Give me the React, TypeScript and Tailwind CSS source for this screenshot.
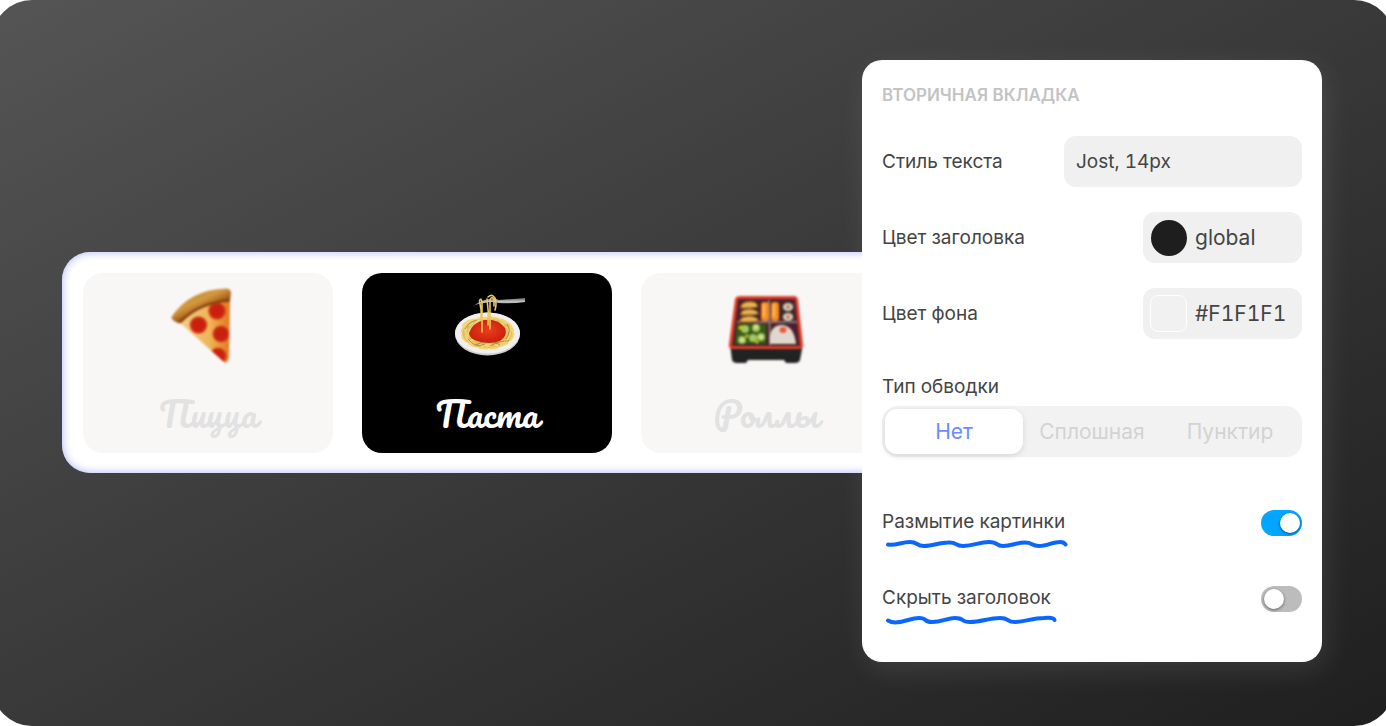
import { useState } from "react";

const BORDER_TYPES = ["Нет", "Сплошная", "Пунктир"];

function PizzaIcon() {
  return (
    <svg viewBox="3 0 90 90" className="h-[90px] w-[90px] blur-[1px]" aria-hidden="true">
      <defs>
        <linearGradient id="cheese" x1="0" y1="0" x2="1" y2="0">
          <stop offset="0" stopColor="#f0cf8c" />
          <stop offset="0.6" stopColor="#efb558" />
          <stop offset="1" stopColor="#e2781c" />
        </linearGradient>
        <linearGradient id="crust" gradientUnits="userSpaceOnUse" x1="33" y1="14" x2="41" y2="31">
          <stop offset="0" stopColor="#c98a2e" />
          <stop offset="0.45" stopColor="#d39a3f" />
          <stop offset="0.8" stopColor="#b87428" />
          <stop offset="1" stopColor="#9a5316" />
        </linearGradient>
        <radialGradient id="pepperoni">
          <stop offset="0" stopColor="#cc1d10" />
          <stop offset="0.7" stopColor="#c8220f" />
          <stop offset="1" stopColor="#dc4a1c" />
        </radialGradient>
        <clipPath id="slice">
          <path d="M19 42 Q40 20 70 19 L69 77 Q68 83 64 82 Z" />
        </clipPath>
      </defs>
      <path d="M19 42 Q40 20 70 19 L69 77 Q68 84 64 82 Z" fill="url(#cheese)" />
      <g clipPath="url(#slice)">
        <circle cx="38.500" cy="45" r="8.800" fill="url(#pepperoni)" />
        <circle cx="57" cy="31" r="8.800" fill="url(#pepperoni)" />
        <circle cx="61" cy="54" r="8.500" fill="url(#pepperoni)" />
        <circle cx="58" cy="76" r="8.500" fill="url(#pepperoni)" />
      </g>
      <path
        d="M11.500 37 Q29 10 66 8.500 Q71 8.500 71 13 L70 21 Q41 22 21 43 Q19 44 16 42 Q11 39.500 11.500 37 Z"
        fill="url(#crust)"
      />
      <path d="M20 42 Q40 22 70 20.500" fill="none" stroke="#8a4310" strokeWidth="2.500" />
    </svg>
  );
}

function PastaIcon() {
  return (
    <svg viewBox="-3 2 80 75" className="h-[75px] w-20 blur-[0.3px]" aria-hidden="true">
      <defs>
        <radialGradient id="sauce" cx="0.5" cy="0.45">
          <stop offset="0" stopColor="#ee3d1c" />
          <stop offset="1" stopColor="#cb230e" />
        </radialGradient>
        <linearGradient id="fork" x1="0" y1="0" x2="0" y2="1">
          <stop offset="0" stopColor="#666" />
          <stop offset="0.5" stopColor="#ccc" />
          <stop offset="1" stopColor="#444" />
        </linearGradient>
      </defs>
      <ellipse cx="37.500" cy="48" rx="32.500" ry="21.500" fill="#cfcfcf" />
      <ellipse cx="37.500" cy="47" rx="32.500" ry="20.500" fill="#f1efee" />
      <ellipse cx="37.500" cy="47" rx="25.500" ry="15.500" fill="#dfbd60" />
      <g fill="none" stroke="#f3d475" strokeWidth="1.800">
        <ellipse cx="37.500" cy="47" rx="26" ry="15.500" strokeDasharray="9 2" />
        <ellipse cx="37" cy="47" rx="22" ry="13" strokeDasharray="5 3" />
        <path d="M12 40 Q20 31 29 35 Q18 42 17 53 M17 36 Q12 49 23 60 M20 55 Q34 48 42 61 M31 62 Q42 53 58 55 M46 60 Q63 55 60 40 M51 33 Q66 39 62 52 M33 33 Q45 28 57 38" />
      </g>
      <g fill="none" stroke="#9b7930" strokeWidth="0.700">
        <path d="M15 43 Q20 35 27 34 M18 53 Q26 63 35 58 M40 60 Q51 54 59 55 M57 38 Q62 45 56 53 M26 59 Q39 51 50 59" />
      </g>
      <path d="M19 47 Q22 37 34 34 Q48 32 55 42 Q58 50 50 55 Q40 59 27 55 Q19 52 19 47Z" fill="url(#sauce)" />
      <path d="M23 20 Q33 13 44 12 L49 14 Q62 13 75 12 L75 16 Q62 18 49 17 Q40 15 35 17 Q30 17 23 20Z" fill="url(#fork)" />
      <g fill="none" stroke="#e8c85e" strokeWidth="1.600" strokeLinecap="round">
        <path d="M32 46 V16 Q31 11 29.500 15 Q32 24 31 33 M38 39 Q39 26 37 13 M40 43 V14 Q42 9 44 14 V20 M45 12 Q47 18 45 24" />
        <path d="M38 11 Q43 7 45 13" />
      </g>
    </svg>
  );
}

function BentoIcon() {
  return (
    <svg viewBox="1 -3 90 85" className="h-[85px] w-[90px] blur-[0.8px]" aria-hidden="true">
      <path d="M10 58 L12 74 Q13 77 17 77 L26 77 L28 74 L64 74 L66 77 L75 77 Q79 77 80 74 L83 58Z" fill="#202321" />
      <path d="M15 13 Q16 10 20 10 L74 10 Q77 10 78 13 L83 58 Q84 63 79 63 L13 63 Q8 63 9 58Z" fill="#df3f2a" />
      <path d="M18 13 L75 13 L80 60 L12 60Z" fill="#4c2028" />
      <path d="M49 14 L50 59 M17 36 L77 36" stroke="#8c737b" strokeWidth="2" />
      <g fill="#d69c3c" stroke="#7b431d" strokeWidth="1">
        <path d="M20 22 Q21 15 31 15 Q38 16 38 21 Q30 24 20 22Z" />
        <path d="M20 29 Q21 22 31 23 Q38 24 39 28 Q30 31 20 29Z" />
        <path d="M19 36 Q20 29 31 30 Q38 31 39 35 Q30 38 19 36Z" />
      </g>
      <path d="M23 20 Q30 17 36 20 M23 27 Q30 24 36 27 M23 34 Q30 31 36 34" stroke="#f2d276" strokeWidth="1.500" fill="none" />
      <g fill="#f58c23">
        <rect x="41" y="16" width="8" height="19" rx="3" />
        <rect x="51" y="16" width="8" height="19" rx="3" />
      </g>
      <path d="M44 18 V31 M54 18 V31" stroke="#ffc064" strokeWidth="2" />
      {[21, 31].map((y) => (
        <g key={y}>
          <ellipse cx="68" cy={y} rx="6" ry="5" fill="#334039" />
          <ellipse cx="68" cy={y} rx="5" ry="4" fill="#d8d4c6" />
          <circle cx="68" cy={y} r="2" fill="#dc714e" />
        </g>
      ))}
      <path d="M17 38 L46 38 L46 58 L15 58Z" fill="#325c17" />
      <g fill="#a4c75f">
        <circle cx="25" cy="43" r="4" />
        <circle cx="36" cy="42" r="4" />
        <circle cx="22" cy="54" r="4" />
        <circle cx="33" cy="52" r="4" />
        <circle cx="41" cy="51" r="4" />
      </g>
      <g fill="#e8e09b">
        <circle cx="36" cy="41" r="2" />
        <circle cx="22" cy="54" r="2" />
        <circle cx="41" cy="51" r="2" />
      </g>
      <path d="M19 43 L22 40 M26 49 L28 51 M36 55 L38 57" stroke="#dfc21b" strokeWidth="3" />
      <path d="M50 58 Q48 40 61 39 Q74 39 76 58Z" fill="#dfd8cf" />
      <ellipse cx="63" cy="44" rx="3.500" ry="3" fill="#ee5737" />
    </svg>
  );
}

const TABS = [
  { label: "Пицца", icon: <PizzaIcon />, active: false },
  { label: "Паста", icon: <PastaIcon />, active: true },
  { label: "Роллы", icon: <BentoIcon />, active: false },
];

function Toggle({ id, defaultChecked }: { id: string; defaultChecked?: boolean }) {
  return (
    <span className="relative h-[26px] w-[41px] shrink-0">
      <input
        id={id}
        type="checkbox"
        defaultChecked={defaultChecked}
        className="peer h-full w-full cursor-pointer appearance-none rounded-full bg-[#bcbcbc] checked:bg-[#00a6ff]"
      />
      <span className="pointer-events-none absolute top-[3px] left-[3px] h-5 w-5 rounded-full bg-white shadow-[0_1px_3px_rgba(0,0,0,0.5)] peer-checked:left-[19px]" />
    </span>
  );
}

export default function App() {
  const [border, setBorder] = useState("Нет");

  return (
    <div className="overflow-hidden bg-white font-['Inter',sans-serif]">
      <main className="-mx-2 flex min-h-screen items-center rounded-[40px] bg-linear-to-br from-[#555555] to-[#1f1f1f] pt-[60px] pr-[72px] pb-16 pl-[70px]">
        {/* the tab strip runs on under the settings panel */}
        <nav className="-mr-5 mt-[3px] flex min-w-0 flex-1 gap-[29px] overflow-hidden rounded-l-[28px] bg-white pt-[21px] pb-5 pl-[21px] shadow-[inset_0_0_8px_#aab2ff]">
          {TABS.map((tab) => (
            <button
              key={tab.label}
              type="button"
              className={
                tab.active
                  ? "flex h-[180px] w-[250px] shrink-0 flex-col items-center rounded-[20px] bg-black text-white"
                  : "flex h-[180px] w-[250px] shrink-0 flex-col items-center rounded-[20px] bg-[#f9f7f6] text-[#e2e2e2]"
              }
            >
              <span className="flex h-[104px] items-center">{tab.icon}</span>
              <span className="pt-3 font-['Pacifico','Liberation_Serif',serif] text-[35px] leading-[48px]">
                {tab.label}
              </span>
            </button>
          ))}
        </nav>

        <section className="relative w-[460px] shrink-0 rounded-[20px] bg-white px-5 pt-[23px] pb-9 text-[19px] leading-6 text-[#444] tabular-nums shadow-[4px_8px_28px_rgba(255,255,255,0.1)]">
          <h2 className="text-[17px] leading-6 font-semibold text-[#c3c3c3]">ВТОРИЧНАЯ ВКЛАДКА</h2>

          <div className="mt-[29px] flex flex-col gap-[25px]">
            <div className="flex items-center justify-between">
              <label htmlFor="text-style">Стиль текста</label>
              <input
                id="text-style"
                defaultValue="Jost, 14px"
                className="h-[51px] w-[238px] rounded-xl bg-[#f0f0f0] px-3"
              />
            </div>
            <div className="flex items-center justify-between">
              <span>Цвет заголовка</span>
              <button type="button" className="flex h-[51px] w-[159px] items-center gap-2 rounded-xl bg-[#f0f0f0] pl-2 text-[21px]">
                <span className="h-9 w-9 rounded-full bg-[#1e1e1e]" />
                global
              </button>
            </div>
            <div className="flex items-center justify-between">
              <span>Цвет фона</span>
              <button type="button" className="flex h-[51px] w-[159px] items-center gap-2 rounded-xl bg-[#f0f0f0] pl-[7px] text-[21px]">
                <span className="h-[37px] w-[37px] rounded-lg border border-white bg-[#f1f1f1]" />
                #F1F1F1
              </button>
            </div>
          </div>

          <p className="mt-9">Тип обводки</p>
          <div className="mt-[7px] flex h-[51px] rounded-2xl bg-[#f2f2f2] p-[3px] text-[21px]">
            {BORDER_TYPES.map((type) => (
              <button
                key={type}
                type="button"
                onClick={() => setBorder(type)}
                className={
                  type === border
                    ? "h-[45px] flex-1 rounded-xl bg-white text-[#6c8dfa] shadow-[0_2px_6px_rgba(0,0,0,0.12)]"
                    : "h-[45px] flex-1 text-[#d3d3d3]"
                }
              >
                {type}
              </button>
            ))}
          </div>

          <div className="mt-[53px] flex items-start justify-between">
            <label htmlFor="blur-image">
              Размытие картинки
              <svg viewBox="0 0 190 12" className="mt-1 h-3 w-[190px]" fill="none" stroke="#0b66ff" strokeWidth="4" strokeLinecap="round" aria-hidden="true">
                <path d="M6 6.500 C14 8 19 4 28 4 C36 4 34 8 42 8 C51 8 57 4.500 66 4.500 C76 4 72 8 81 8 C92 8 97 4 107 4 C117 4 113 8 121 8 C130 8 134 4.500 143 4.500 C151 4.500 149 8 157 8 C165 8 171 4 178 4 Q182 4 183.500 6.500" />
              </svg>
            </label>
            <Toggle id="blur-image" defaultChecked />
          </div>
          <div className="mt-9 flex items-start justify-between">
            <label htmlFor="hide-title">
              Скрыть заголовок
              <svg viewBox="0 0 190 12" className="mt-1 h-3 w-[190px]" fill="none" stroke="#0b66ff" strokeWidth="4" strokeLinecap="round" aria-hidden="true">
                <path d="M6 6.500 C15 12 27 4 37 4 C46 4 41 8 50 8 C60 8 65 4 73 4 C83 4 78 8 88 8 C99 8 107 4 118 4 C128 4 124 8 133 8 C143 8 150 4 162 4 Q172 3 172.500 6" />
              </svg>
            </label>
            <Toggle id="hide-title" />
          </div>
        </section>
      </main>
    </div>
  );
}
